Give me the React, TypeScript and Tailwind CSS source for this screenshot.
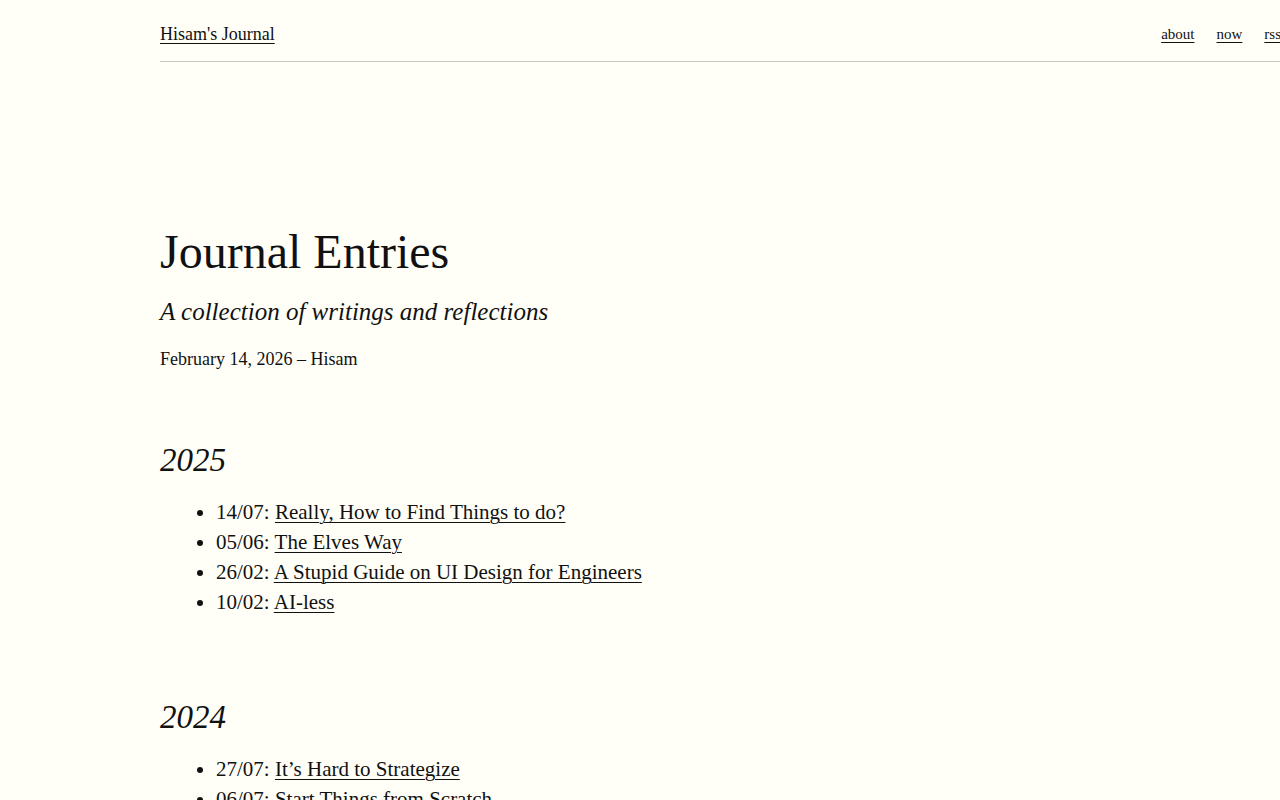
const entries2025 = [
  { date: "14/07", title: "Really, How to Find Things to do?" },
  { date: "05/06", title: "The Elves Way" },
  { date: "26/02", title: "A Stupid Guide on UI Design for Engineers" },
  { date: "10/02", title: "AI-less" },
];

const entries2024 = [
  { date: "27/07", title: "It’s Hard to Strategize" },
  { date: "06/07", title: "Start Things from Scratch" },
];

function YearSection({
  year,
  entries,
  className,
}: {
  year: string;
  entries: { date: string; title: string }[];
  className: string;
}) {
  return (
    <section className={className}>
      <h2 className="text-[33px] italic leading-none font-normal">{year}</h2>
      <ul className="mt-[20px] list-disc pl-[56px] text-[21px] leading-[30px]">
        {entries.map((e) => (
          <li key={e.date + e.title}>
            {e.date}:{" "}
            <a href="#" className="underline decoration-1 underline-offset-[3px]">
              {e.title}
            </a>
          </li>
        ))}
      </ul>
    </section>
  );
}

export default function App() {
  return (
    <div className="h-[800px] w-full overflow-hidden bg-[#fffff8] font-['Liberation_Serif','Times_New_Roman',serif] text-[#111]">
      <header className="ml-[160px] box-border flex h-[62px] w-[1121px] items-center justify-between border-b border-[#c8c8c8] pt-[8px]">
        <a href="#" className="text-[18px] underline decoration-1 underline-offset-[3px]">
          Hisam's Journal
        </a>
        <nav className="flex items-center gap-[22px] text-[15px]">
          <a href="#" className="underline decoration-1 underline-offset-[3px]">
            about
          </a>
          <a href="#" className="underline decoration-1 underline-offset-[3px]">
            now
          </a>
          <a href="#" className="underline decoration-1 underline-offset-[3px]">
            rss
          </a>
        </nav>
      </header>

      <main className="ml-[160px] w-[960px]">
        <h1 className="mt-[166px] text-[48px] leading-none font-normal">
          Journal Entries
        </h1>
        <p className="mt-[23px] text-[25px] italic leading-none">
          A collection of writings and reflections
        </p>
        <p className="mt-[22px] text-[18px] leading-[27px]">
          February 14, 2026 – Hisam
        </p>

        <YearSection year="2025" entries={entries2025} className="mt-[71px]" />
        <YearSection year="2024" entries={entries2024} className="mt-[84px]" />
      </main>
    </div>
  );
}
